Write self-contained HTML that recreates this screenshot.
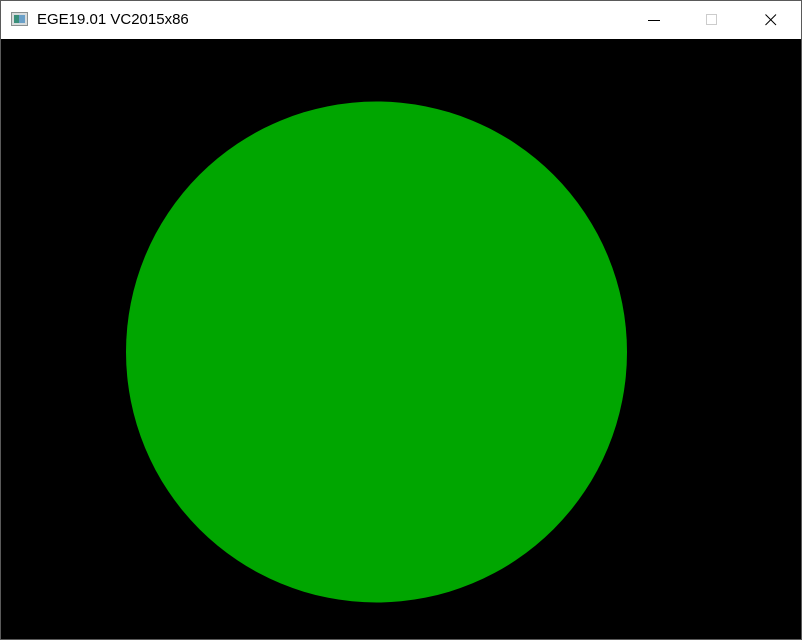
<!DOCTYPE html>
<html><head><style>
body{margin:0;width:802px;height:640px;overflow:hidden;background:#fff;position:relative;font-family:"Segoe UI","Liberation Sans","Noto Sans CJK SC",sans-serif}
.frame{position:absolute;left:0;top:0;width:800px;height:638px;border:1px solid #5a5a5a}
.title{position:absolute;left:1px;top:1px;width:800px;height:38px;background:#fff}
.t{position:absolute;left:36px;top:10px;font-size:15px;color:#000}
.cv{position:absolute;left:1px;top:39px;width:800px;height:600px;background:#000}
</style></head><body>
<div class="frame"></div>
<div class="title">
<svg style="position:absolute;left:10px;top:11px" width="18" height="15"><rect x="0.5" y="0.5" width="16" height="13" fill="#d8dcdc" stroke="#8a9090"/><rect x="3" y="3" width="5" height="8" fill="#3a8f7a"/><rect x="8" y="3" width="6" height="8" fill="#6aa0c8"/></svg>
<div class="t">EGE19.01 VC2015x86</div>
<svg style="position:absolute;left:647px;top:19px" width="12" height="2"><rect width="12" height="1" fill="#000"/></svg>
<svg style="position:absolute;left:705px;top:13px" width="12" height="12"><rect x="0.5" y="0.5" width="10" height="10" fill="none" stroke="#ccc"/></svg>
<svg style="position:absolute;left:764px;top:13px" width="12" height="12"><path d="M0.5 0.5L11 11M11 0.5L0.5 11" stroke="#000" stroke-width="1"/></svg>
</div>
<div class="cv"><svg width="800" height="600"><circle cx="375.5" cy="313" r="250.5" fill="#00a600"/></svg></div>
</body></html>
